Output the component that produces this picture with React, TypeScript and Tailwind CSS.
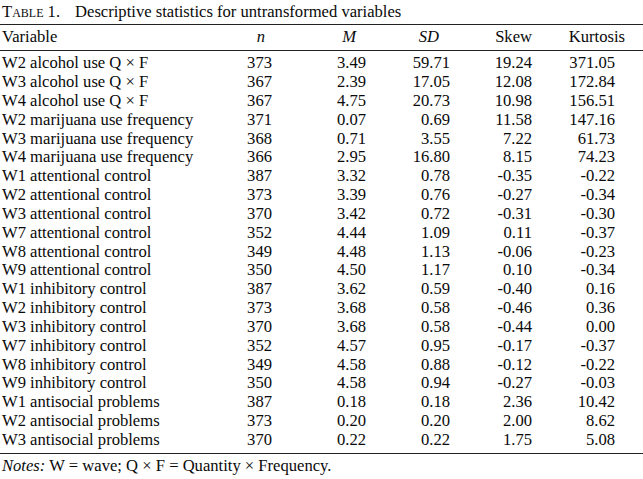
import React from "react";

const rows: string[][] = [
  ["W2 alcohol use Q × F", "373", "3.49", "59.71", "19.24", "371.05"],
  ["W3 alcohol use Q × F", "367", "2.39", "17.05", "12.08", "172.84"],
  ["W4 alcohol use Q × F", "367", "4.75", "20.73", "10.98", "156.51"],
  ["W2 marijuana use frequency", "371", "0.07", "0.69", "11.58", "147.16"],
  ["W3 marijuana use frequency", "368", "0.71", "3.55", "7.22", "61.73"],
  ["W4 marijuana use frequency", "366", "2.95", "16.80", "8.15", "74.23"],
  ["W1 attentional control", "387", "3.32", "0.78", "-0.35", "-0.22"],
  ["W2 attentional control", "373", "3.39", "0.76", "-0.27", "-0.34"],
  ["W3 attentional control", "370", "3.42", "0.72", "-0.31", "-0.30"],
  ["W7 attentional control", "352", "4.44", "1.09", "0.11", "-0.37"],
  ["W8 attentional control", "349", "4.48", "1.13", "-0.06", "-0.23"],
  ["W9 attentional control", "350", "4.50", "1.17", "0.10", "-0.34"],
  ["W1 inhibitory control", "387", "3.62", "0.59", "-0.40", "0.16"],
  ["W2 inhibitory control", "373", "3.68", "0.58", "-0.46", "0.36"],
  ["W3 inhibitory control", "370", "3.68", "0.58", "-0.44", "0.00"],
  ["W7 inhibitory control", "352", "4.57", "0.95", "-0.17", "-0.37"],
  ["W8 inhibitory control", "349", "4.58", "0.88", "-0.12", "-0.22"],
  ["W9 inhibitory control", "350", "4.58", "0.94", "-0.27", "-0.03"],
  ["W1 antisocial problems", "387", "0.18", "0.18", "2.36", "10.42"],
  ["W2 antisocial problems", "373", "0.20", "0.20", "2.00", "8.62"],
  ["W3 antisocial problems", "370", "0.22", "0.22", "1.75", "5.08"],
];

const grid = "grid grid-cols-[220px_52px_94px_84px_82px_93px_18px]";

export default function App() {
  return (
    <div className="w-[643px] h-[479px] bg-white text-[#0a0a0a] [font-family:'Liberation_Serif',serif] text-[16.6px] leading-none overflow-hidden">
      <div className="h-[24px] flex items-center pl-[2px]">
        <span className="[font-variant:small-caps]">Table 1.</span>
        <span className="ml-[15px]">Descriptive statistics for untransformed variables</span>
      </div>
      <div className="border-t border-[#222]" />
      <div className={`${grid} h-[25px] items-center`}>
        <div className="pl-[2px]">Variable</div>
        <div className="text-right pr-[7px] italic">n</div>
        <div className="text-right pr-[10px] italic">M</div>
        <div className="text-right pr-[11px] italic">SD</div>
        <div className="text-right">Skew</div>
        <div className="text-right">Kurtosis</div>
        <div />
      </div>
      <div className="border-t border-[#222]" />
      <div className="py-[3px]">
        {rows.map((r) => (
          <div key={r[0]} className={`${grid} h-[18.85px] items-center`}>
            <div className="pl-[2px] whitespace-nowrap">{r[0]}</div>
            <div className="text-right">{r[1]}</div>
            <div className="text-right">{r[2]}</div>
            <div className="text-right">{r[3]}</div>
            <div className="text-right">{r[4]}</div>
            <div className="text-right pr-[10px]">{r[5]}</div>
            <div />
          </div>
        ))}
      </div>
      <div className="border-t border-[#222]" />
      <div className="h-[26px] flex items-center pl-[2px]">
        <span className="italic">Notes:</span>
        <span className="ml-[4px]">W = wave; Q × F = Quantity × Frequency.</span>
      </div>
    </div>
  );
}
